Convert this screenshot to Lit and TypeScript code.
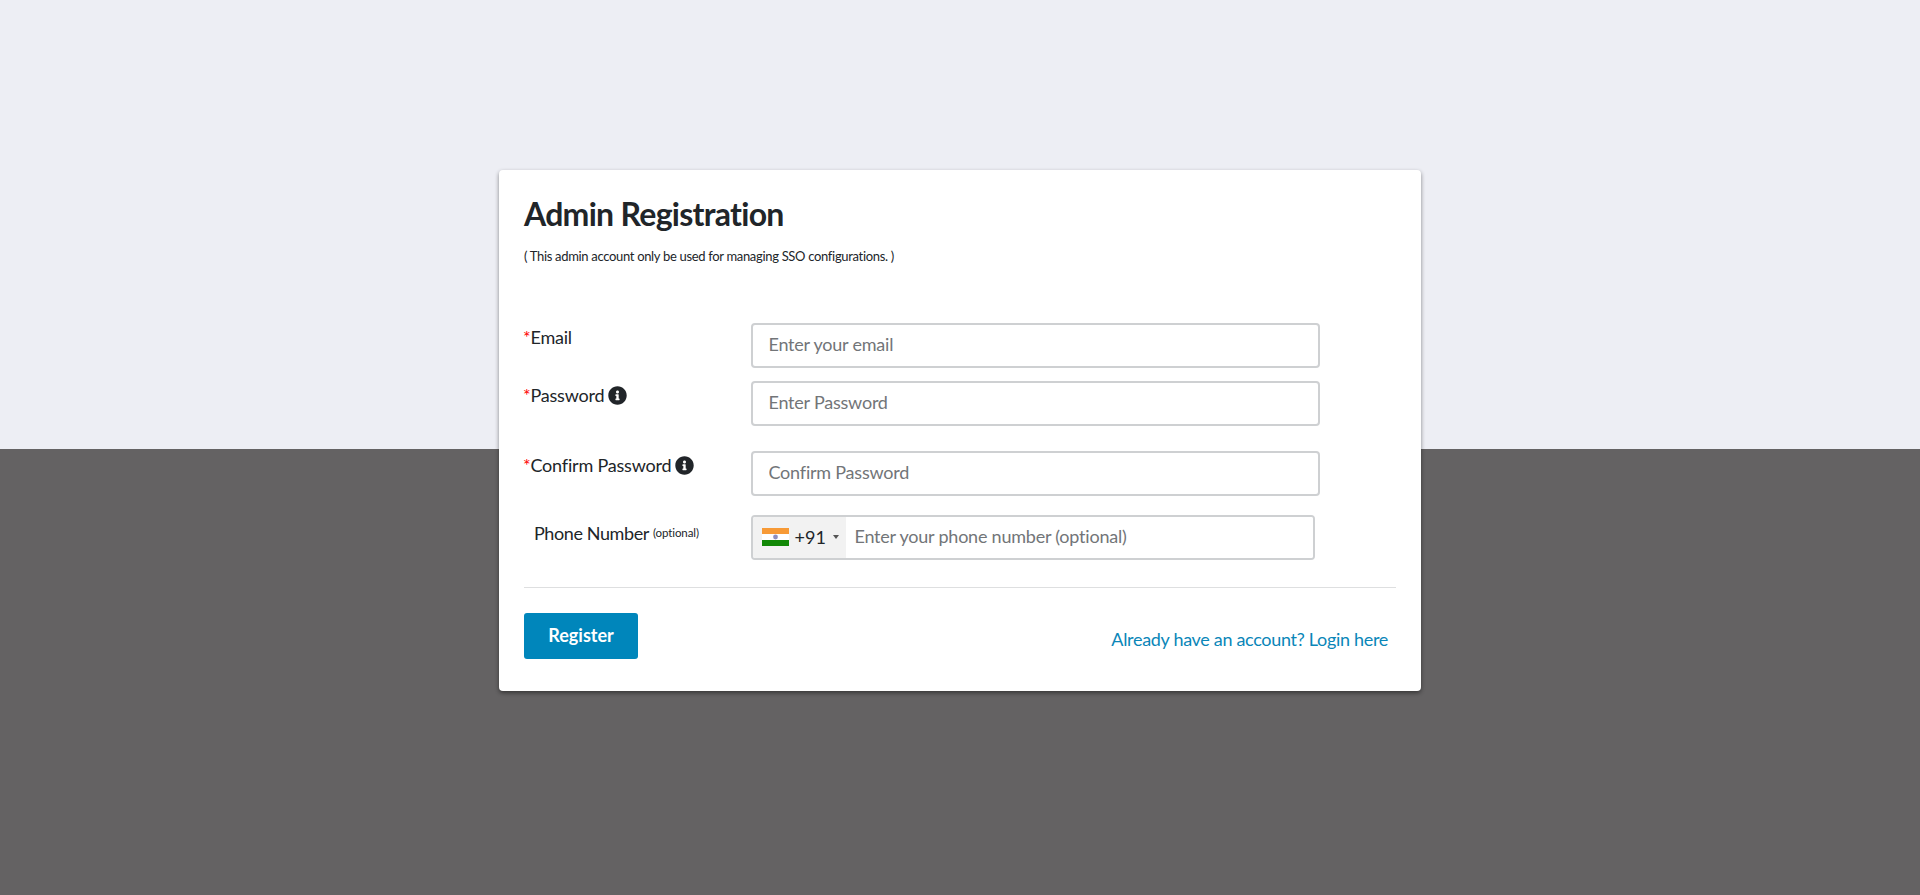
import { LitElement, html, css } from "lit";
import { customElement } from "lit/decorators.js";

const info = html`<svg class="info" viewBox="0 0 512 512" aria-hidden="true"><path fill="currentColor" d="M256 8C119 8 8 119 8 256s111 248 248 248 248-111 248-248S393 8 256 8zm0 110c23.200 0 42 18.800 42 42s-18.800 42-42 42-42-18.800-42-42 18.800-42 42-42zm56 254c0 6.600-5.400 12-12 12h-88c-6.600 0-12-5.400-12-12v-24c0-6.600 5.400-12 12-12h12v-64h-12c-6.600 0-12-5.400-12-12v-24c0-6.600 5.400-12 12-12h64c6.600 0 12 5.400 12 12v100h12c6.600 0 12 5.400 12 12v24z"/></svg>`;

@customElement("app-root")
export class AppRoot extends LitElement {
  static styles = css`
    :host {
      display: flex;
      justify-content: center;
      align-items: flex-start;
      box-sizing: border-box;
      width: 100%;
      height: 895px;
      padding-top: 170px;
      background: linear-gradient(to bottom, #edeef4 0, #edeef4 449px, #646263 449px, #646263 100%);
      font-family: Lato, sans-serif;
      color: #212529;
      overflow: hidden;
    }
    .card {
      box-sizing: border-box;
      width: 922px;
      height: 521px;
      padding: 25px 25px 0 25px;
      background: #fff;
      border-radius: 4px;
      box-shadow: 0 2px 4px rgba(0, 0, 0, 0.45);
    }
    h1 {
      margin: 0;
      font-size: 32px;
      line-height: 38px;
      font-weight: 700;
      letter-spacing: -0.72px;
    }
    .note {
      margin: 13px 0 0;
      font-size: 13px;
      line-height: 20px;
      letter-spacing: -0.32px;
    }
    .form {
      display: flex;
      flex-direction: column;
      margin-top: 57px;
    }
    .row {
      display: grid;
      grid-template-columns: 226.5px 569px;
      align-items: start;
    }
    .row.pw { margin-top: 13px; }
    .row.cf { margin-top: 25px; }
    .row.ph { margin-top: 19px; }
    label {
      display: flex;
      align-items: center;
      gap: 4px;
      font-size: 18px;
      line-height: 26px;
      letter-spacing: -0.2px;
      padding-top: 1px;
    }
    .req { color: #f00; margin-right: -4px; margin-left: -1px; }
    .info { width: 19px; height: 19px; color: #212529; display: block; flex: none; }
    label.plain { padding-left: 10px; padding-top: 5px; letter-spacing: -0.4px; }
    label small { font-size: 11.500px; line-height: 14px; margin-top: -1px; letter-spacing: -0.1px; }
    input {
      box-sizing: border-box;
      width: 100%;
      height: 45px;
      padding: 0 16px 3px;
      border: 2px solid #ced0d2;
      border-radius: 4px;
      font: 18px Lato, sans-serif;
      letter-spacing: -0.22px;
      color: #212529;
      background: #fff;
      outline: none;
    }
    input::placeholder { color: #727578; opacity: 1; }
    .phone {
      box-sizing: border-box;
      display: flex;
      width: 564px;
      height: 45px;
      border: 2px solid #ced0d2;
      border-radius: 4px;
      overflow: hidden;
    }
    .dial {
      display: flex;
      align-items: center;
      flex: none;
      width: 93px;
      padding: 0 0 2px 9px;
      box-sizing: border-box;
      background: #f2f2f2;
      font-size: 18px;
    }
    .flag { display: block; width: 27px; height: 18px; margin-right: 6px; }
    .caret {
      width: 0;
      height: 0;
      margin-left: 7px;
      border-left: 3px solid transparent;
      border-right: 3px solid transparent;
      border-top: 4px solid #555;
    }
    .phone input { border: 0; border-radius: 0; height: 100%; padding: 0 9px 3px; flex: 1; min-width: 0; }
    hr {
      margin: 27px 0 0;
      width: 872px;
      border: 0;
      border-top: 1px solid #dedfe0;
    }
    .actions {
      display: flex;
      justify-content: space-between;
      align-items: flex-start;
      width: 864px;
      margin-top: 25px;
    }
    button {
      width: 114px;
      height: 46px;
      padding: 0 0 2px;
      border: 0;
      border-radius: 3px;
      background: #0086bb;
      color: #fff;
      font: 700 18px Lato, sans-serif;
    }
    a {
      margin-top: 13px;
      font-size: 18px;
      line-height: 26px;
      letter-spacing: -0.31px;
      color: #0a86b8;
      text-decoration: none;
    }
  `;

  render() {
    return html`
      <div class="card">
        <h1>Admin Registration</h1>
        <p class="note">( This admin account only be used for managing SSO configurations. )</p>
        <div class="form">
          <div class="row">
            <label><span class="req">*</span>Email</label>
            <input placeholder="Enter your email" />
          </div>
          <div class="row pw">
            <label><span class="req">*</span>Password ${info}</label>
            <input placeholder="Enter Password" />
          </div>
          <div class="row cf">
            <label><span class="req">*</span>Confirm Password ${info}</label>
            <input placeholder="Confirm Password" />
          </div>
          <div class="row ph">
            <label class="plain">Phone Number <small>(optional)</small></label>
            <div class="phone">
              <div class="dial">
                <svg class="flag" viewBox="0 0 27 18" aria-hidden="true">
                  <rect width="27" height="6" fill="#f79a36" />
                  <rect y="6" width="27" height="6" fill="#fff" />
                  <rect y="12" width="27" height="6" fill="#128807" />
                  <circle cx="13.500" cy="9" r="2.400" fill="#8f8fbf" />
                </svg>
                +91<span class="caret"></span>
              </div>
              <input placeholder="Enter your phone number (optional)" />
            </div>
          </div>
        </div>
        <hr />
        <div class="actions">
          <button>Register</button>
          <a href="#">Already have an account? Login here</a>
        </div>
      </div>
    `;
  }
}
